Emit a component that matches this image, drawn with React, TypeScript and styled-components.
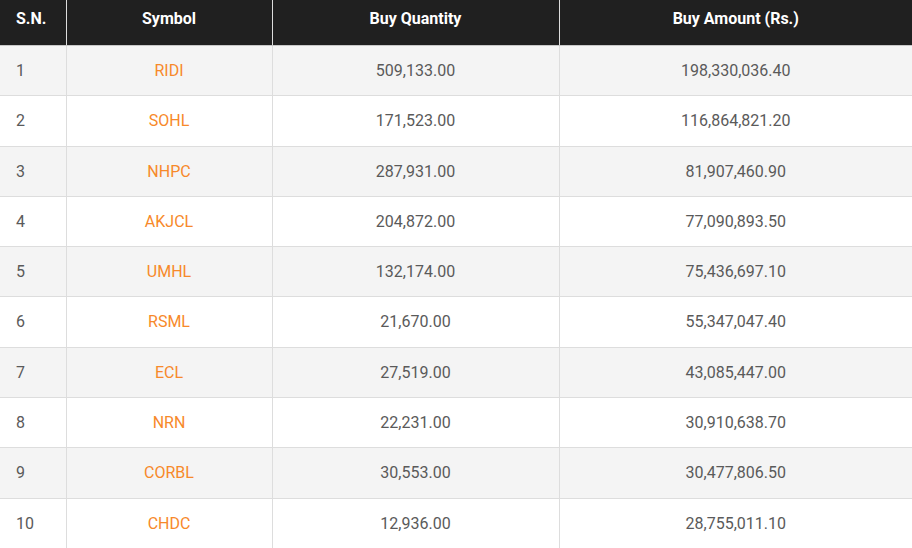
import React from 'react'
import styled, { createGlobalStyle } from 'styled-components'

interface Row {
  symbol: string
  quantity: string
  amount: string
}

const rows: Row[] = [
  { symbol: 'RIDI', quantity: '509,133.00', amount: '198,330,036.40' },
  { symbol: 'SOHL', quantity: '171,523.00', amount: '116,864,821.20' },
  { symbol: 'NHPC', quantity: '287,931.00', amount: '81,907,460.90' },
  { symbol: 'AKJCL', quantity: '204,872.00', amount: '77,090,893.50' },
  { symbol: 'UMHL', quantity: '132,174.00', amount: '75,436,697.10' },
  { symbol: 'RSML', quantity: '21,670.00', amount: '55,347,047.40' },
  { symbol: 'ECL', quantity: '27,519.00', amount: '43,085,447.00' },
  { symbol: 'NRN', quantity: '22,231.00', amount: '30,910,638.70' },
  { symbol: 'CORBL', quantity: '30,553.00', amount: '30,477,806.50' },
  { symbol: 'CHDC', quantity: '12,936.00', amount: '28,755,011.10' }
]

const GlobalStyle = createGlobalStyle`
  body {
    margin: 0;
    background: #fff;
    font-family: Roboto, 'Liberation Sans', sans-serif;
  }
`

const App = () => {
  return (
    <>
      <GlobalStyle />
      <Table>
        <colgroup>
          <col style={{ width: 66 }} />
          <col style={{ width: 206 }} />
          <col style={{ width: 287 }} />
          <col />
        </colgroup>
        <thead>
          <tr>
            <HeadCell align="left">S.N.</HeadCell>
            <HeadCell>Symbol</HeadCell>
            <HeadCell>Buy Quantity</HeadCell>
            <HeadCell>Buy Amount (Rs.)</HeadCell>
          </tr>
        </thead>
        <tbody>
          {rows.map((row, index) => (
            <BodyRow key={row.symbol} striped={index % 2 === 0}>
              <Cell align="left">{index + 1}</Cell>
              <Cell>
                <SymbolLink href="#">{row.symbol}</SymbolLink>
              </Cell>
              <Cell>{row.quantity}</Cell>
              <Cell>{row.amount}</Cell>
            </BodyRow>
          ))}
        </tbody>
      </Table>
    </>
  )
}

const Table = styled.table`
  width: 912px;
  border-collapse: collapse;
  table-layout: fixed;
  font-size: 16px;
`

const HeadCell = styled.th<{ align?: 'left' | 'center' }>`
  padding: 8px 16px 16px;
  line-height: 21px;
  background: #202020;
  color: #fff;
  font-weight: 700;
  font-size: 16px;
  text-align: ${({ align }) => align ?? 'center'};
  border-left: 1px solid #ddd;
  border-bottom: 1px solid #c8c8c8;

  &:first-child {
    border-left: none;
  }
`

const BodyRow = styled.tr<{ striped: boolean }>`
  background: ${({ striped }) => (striped ? '#f4f4f4' : '#fff')};
`

const Cell = styled.td<{ align?: 'left' | 'center' }>`
  padding: 13px 16px;
  line-height: 23.3px;
  color: #5a5a5a;
  text-align: ${({ align }) => align ?? 'center'};
  border-left: 1px solid #ddd;
  border-bottom: 1px solid #ddd;

  &:first-child {
    border-left: none;
  }
`

const SymbolLink = styled.a`
  color: #f7892a;
  text-decoration: none;
`

export default App
